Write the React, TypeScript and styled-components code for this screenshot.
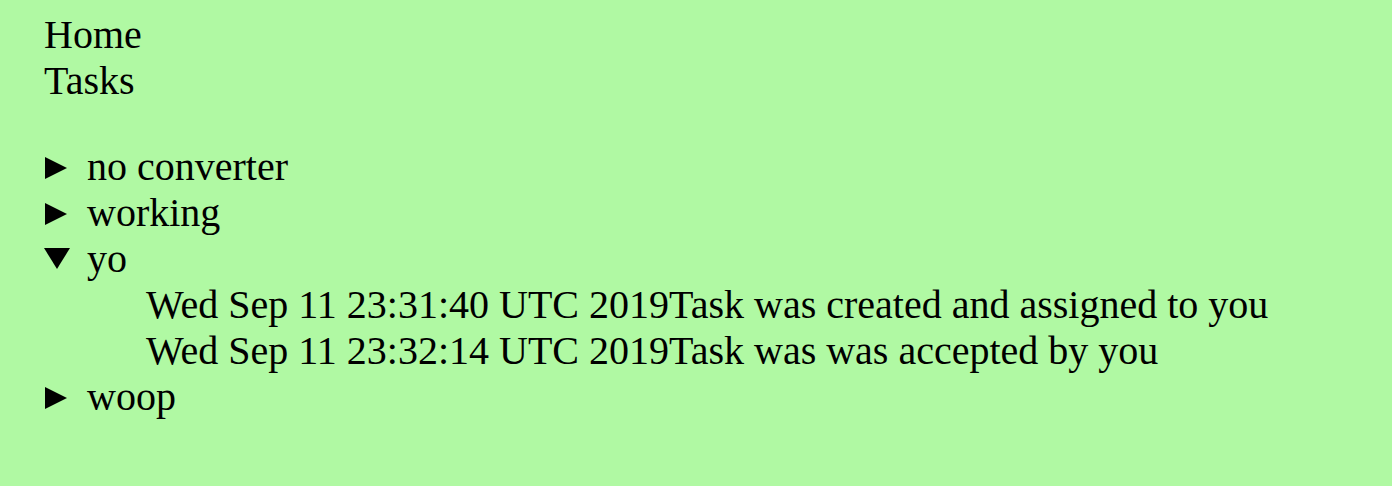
import React from "react";
import styled, { createGlobalStyle } from "styled-components";

const GlobalStyle = createGlobalStyle`
  html, body {
    margin: 0;
    padding: 0;
    background: #b0f9a3;
  }
  body {
    font-family: "Liberation Serif", "Times New Roman", serif;
    color: #000;
  }
`;

const Page = styled.div`
  min-height: 486px;
  box-sizing: border-box;
  padding: 12px 0 0 44px;
  font-family: "Liberation Serif", "Times New Roman", serif;
  font-size: 40px;
  line-height: 46px;
`;

const Nav = styled.nav`
  display: flex;
  flex-direction: column;
`;

const NavLink = styled.a`
  color: #000;
  text-decoration: none;
  cursor: pointer;
`;

const TaskList = styled.div`
  margin-top: 40px;
  display: flex;
  flex-direction: column;
`;

const Task = styled.details`
  &[open] > summary .tri-right { display: none; }
  &:not([open]) > summary .tri-down { display: none; }
`;

const Summary = styled.summary`
  list-style: none;
  display: flex;
  align-items: center;
  cursor: pointer;
  &::-webkit-details-marker { display: none; }
`;

const Marker = styled.span`
  width: 43px;
  height: 46px;
  display: flex;
  align-items: center;
  flex-shrink: 0;
  svg {
    display: block;
    flex-shrink: 0;
  }
`;

const History = styled.div`
  padding-left: 102px;
  display: flex;
  flex-direction: column;
`;

const Entry = styled.div`
  white-space: nowrap;
`;

const Triangle = () => (
  <Marker>
    <svg className="tri-right" width="23" height="22" viewBox="0 0 23 22" style={{ marginLeft: 1, marginTop: 1 }}>
      <polygon points="0,0 22,11 0,22" fill="#000" />
    </svg>
    <svg className="tri-down" width="26" height="22" viewBox="0 0 26 22">
      <polygon points="0,0 26,0 13,21" fill="#000" />
    </svg>
  </Marker>
);

type TaskData = { name: string; open?: boolean; history: { date: string; text: string }[] };

const tasks: TaskData[] = [
  { name: "no converter", history: [] },
  { name: "working", history: [] },
  {
    name: "yo",
    open: true,
    history: [
      { date: "Wed Sep 11 23:31:40 UTC 2019", text: "Task was created and assigned to you" },
      { date: "Wed Sep 11 23:32:14 UTC 2019", text: "Task was was accepted by you" },
    ],
  },
  { name: "woop", history: [] },
];

export default function App() {
  return (
    <>
      <GlobalStyle />
      <Page>
        <Nav>
          <NavLink>Home</NavLink>
          <NavLink>Tasks</NavLink>
        </Nav>
        <TaskList>
          {tasks.map((t) => (
            <Task key={t.name} open={t.open}>
              <Summary>
                <Triangle />
                <span>{t.name}</span>
              </Summary>
              <History>
                {t.history.map((h) => (
                  <Entry key={h.date}>
                    {h.date}
                    {h.text}
                  </Entry>
                ))}
              </History>
            </Task>
          ))}
        </TaskList>
      </Page>
    </>
  );
}
